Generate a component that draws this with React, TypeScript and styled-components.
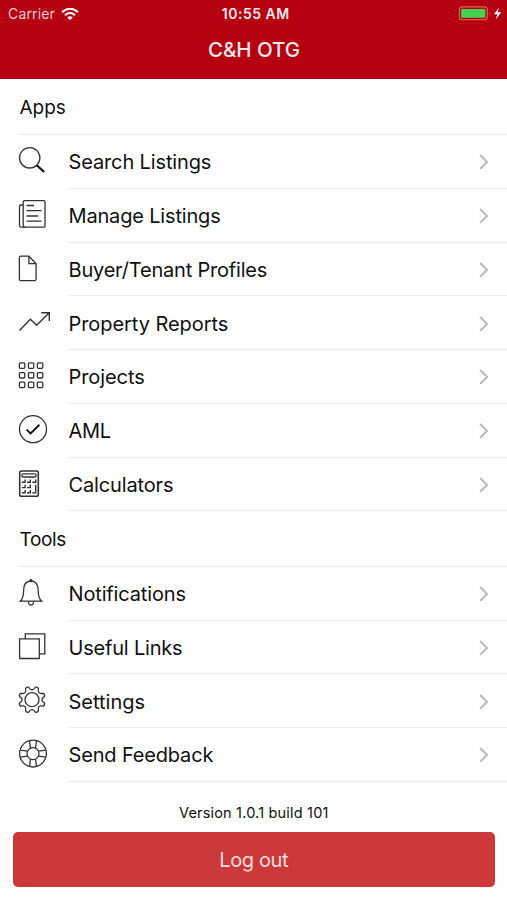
import React from "react";
import styled, { createGlobalStyle } from "styled-components";

const GlobalStyle = createGlobalStyle`
  * { box-sizing: border-box; }
  body { margin: 0; background: #fff; font-family: Inter, "Liberation Sans", sans-serif; color: #111; }
`;

const Screen = styled.main`
  width: 507px;
  height: 900px;
  overflow: hidden;
  background: #fefefe;
  display: flex;
  flex-direction: column;
`;

const Header = styled.header`
  height: 79px;
  flex: none;
  background: #b50012;
  color: #ffe9ea;
`;

const StatusBar = styled.div`
  height: 28px;
  padding: 0 3.5px 0 8px;
  display: grid;
  grid-template-columns: 1fr auto 1fr;
  align-items: center;
  font-size: 14px;
  line-height: 28px;
`;

const Carrier = styled.div`
  display: flex;
  align-items: center;
  gap: 6.5px;
  color: #f8cdd0;
  letter-spacing: 0.15px;
`;

const Clock = styled.div`
  font-weight: 600;
  font-size: 14px;
  letter-spacing: 0.5px;
`;

const Power = styled.div`
  display: flex;
  justify-content: flex-end;
  align-items: center;
`;

const Title = styled.h1`
  margin: 0;
  font-size: 20.5px;
  line-height: 44px;
  font-weight: 500;
  text-align: center;
  letter-spacing: -0.05px;
  padding-left: 1px;
`;

const SectionTitle = styled.h2<{ $height: number; $tracking: number }>`
  margin: 0 0 0 19px;
  padding-left: 0.5px;
  height: ${(p) => p.$height}px;
  flex: none;
  border-bottom: 1px solid #e9e9e9;
  font-size: 19px;
  line-height: 57px;
  font-weight: 400;
  letter-spacing: ${(p) => p.$tracking}px;
`;

const List = styled.ul`
  margin: 0;
  padding: 0;
  list-style: none;
  flex: none;
`;

const Row = styled.li`
  height: 53.75px;
  display: flex;
`;

const Glyph = styled.svg`
  width: 68px;
  height: 53px;
  flex: none;
  fill: none;
  stroke: #333;
  stroke-width: 1.3;
`;

const RowBody = styled.div`
  flex: 1;
  display: flex;
  align-items: center;
  justify-content: space-between;
  padding-right: 18px;
  border-bottom: 1px solid #e9e9e9;
`;

const Label = styled.span<{ $tracking: number }>`
  padding: 2px 0 0 0.5px;
  font-size: 20px;
  line-height: 50px;
  letter-spacing: ${(p) => p.$tracking}px;
  white-space: nowrap;
`;

const Footer = styled.footer`
  padding: 20px 12.5px 0 13px;
  text-align: center;
`;

const Version = styled.div`
  font-size: 14.5px;
  line-height: 22px;
  height: 30px;
  letter-spacing: 0.18px;
`;

const LogoutButton = styled.button`
  width: 100%;
  height: 55px;
  border: 0;
  border-radius: 5px;
  background: #cc393b;
  color: #fbdfdf;
  font: 400 20px/55px Inter, "Liberation Sans", sans-serif;
  letter-spacing: -0.35px;
  padding: 1px 0 0;
  display: block;
`;

const gearPath = (() => {
  const cx = 32;
  const cy = 25.7;
  const at = (r: number, deg: number) => {
    const a = (deg * Math.PI) / 180;
    return `${(cx + r * Math.cos(a)).toFixed(2)} ${(cy + r * Math.sin(a)).toFixed(2)}`;
  };
  let d = `M${at(9.9, 0)}`;
  for (let i = 0; i < 8; i++) {
    const t = i * 45 + 22.5;
    d += `Q${at(9.9, t - 13)} ${at(12.9, t - 7.5)}Q${at(14.2, t)} ${at(12.9, t + 7.5)}Q${at(9.9, t + 13)} ${at(9.9, t + 22.5)}`;
  }
  return d + "Z";
})();

const icons: Record<string, React.ReactNode> = {
  search: (
    <>
      <circle cx="29.7" cy="22.8" r="10.2" />
      <path d="M36.8 30.2L44.2 37" stroke="#111" strokeWidth="2.2" />
    </>
  ),
  news: (
    <>
      <rect x="23.2" y="11.6" width="21.8" height="26.6" rx="1.2" />
      <path d="M23 16h-2.2q-1.3 0-1.3 1.4v19.1q0 1.7 1.8 1.7h4M26.5 16.5H34M26.5 21.7h15M26.5 27h11.7M26.5 32.2h15" />
    </>
  ),
  file: <path d="M20.7 13.2h8.2l7.2 7.5v15.6q0 1.4-1.4 1.4h-14q-1.3 0-1.3-1.4V14.5q0-1.3 1.3-1.3zM28.9 13.2v7.5h7.2" />,
  trend: <path d="M19.5 34.5L30.4 23.3l6.2 6L49 17M41.2 16.8h8.1v8.2" strokeWidth="1.4" />,
  grid: (
    <>
      {[15.5, 25.2, 34.8].map((y) =>
        [22, 31, 40].map((x) => <rect key={`${x}-${y}`} x={x - 2.6} y={y - 2.6} width="5.4" height="5.4" rx="1" />),
      )}
    </>
  ),
  check: (
    <>
      <circle cx="33" cy="25.2" r="13.5" />
      <path d="M26.6 25.6l4 3.9 8.8-8.7" stroke="#111" strokeWidth="1.9" />
    </>
  ),
  calculator: (
    <>
      <rect x="19.7" y="13" width="18.6" height="25.2" rx="1.8" strokeWidth="1.6" />
      <rect x="22" y="15.8" width="14" height="3.2" rx="1" />
      <path d="M21.8 24.3h3.3v-2.8M27 24.3h3.3v-2.8M32.3 24.3h3.4v-2.8M21.8 29.6h3.3v-2.8M27 29.6h3.3v-2.8M21.8 34.8h3.3V32M27 34.8h3.3V32M32.2 34.9h3.5v-8.1" strokeWidth="1.4" />
    </>
  ),
  bell: (
    <>
      <path d="M20.2 34.2h21.5q-3.5-3-3.5-10.5 0-9.7-7.3-9.7t-7.3 9.7q0 7.5-3.4 10.5z" />
      <path d="M28.4 34.5q0 3.5 2.6 3.5t2.6-3.5" />
      <circle cx="31" cy="13.7" r="1" fill="#222" />
    </>
  ),
  windows: <path d="M19.6 17.9h19.7v19.6H19.6zM25.3 17.6v-4.7h19.5v20h-5.2" />,
  gear: (
    <>
      <path d={gearPath} />
      <circle cx="32" cy="25.7" r="7" />
    </>
  ),
  buoy: (
    <>
      <circle cx="33" cy="25.6" r="13.4" />
      <circle cx="33" cy="25.6" r="6" />
      <path d="M29.5 12.8l1 7.4M36.5 12.8l-1 7.4M29.5 38.4l1-7.4M36.5 38.4l-1-7.4M20.2 22.1l7.4 1M20.2 29.1l7.4-1M45.8 22.1l-7.4 1M45.8 29.1l-7.4-1" />
    </>
  ),
};

type Item = { icon: string; label: string; tracking: number };

const apps: Item[] = [
  { icon: "search", label: "Search Listings", tracking: -0.13 },
  { icon: "news", label: "Manage Listings", tracking: -0.17 },
  { icon: "file", label: "Buyer/Tenant Profiles", tracking: -0.2 },
  { icon: "trend", label: "Property Reports", tracking: -0.06 },
  { icon: "grid", label: "Projects", tracking: -0.08 },
  { icon: "check", label: "AML", tracking: -0.3 },
  { icon: "calculator", label: "Calculators", tracking: -0.15 },
];

const tools: Item[] = [
  { icon: "bell", label: "Notifications", tracking: -0.15 },
  { icon: "windows", label: "Useful Links", tracking: -0.2 },
  { icon: "gear", label: "Settings", tracking: 0 },
  { icon: "buoy", label: "Send Feedback", tracking: -0.16 },
];

const Menu = ({ items }: { items: Item[] }) => (
  <List>
    {items.map((item) => (
      <Row key={item.label}>
        <Glyph viewBox="0 0 68 53">{icons[item.icon]}</Glyph>
        <RowBody>
          <Label $tracking={item.tracking}>{item.label}</Label>
          <svg width="10" height="18" viewBox="0 0 10 18" fill="none" stroke="#bababa" strokeWidth="2">
            <path d="M1.2 3L8 9.9l-6.8 6.9" />
          </svg>
        </RowBody>
      </Row>
    ))}
  </List>
);

export default function App() {
  return (
    <>
      <GlobalStyle />
      <Screen>
        <Header>
          <StatusBar>
            <Carrier>
              Carrier
              <svg width="18" height="13" viewBox="0 0 18 13" fill="none" stroke="#fff" strokeWidth="2.1">
                <path d="M1 4.2Q9-2.7 17 4.2M3.9 7.2Q9 2.8 14.1 7.2" />
                <path d="M6.2 9.4Q9 7 11.8 9.4L9 12.1z" fill="#fff" stroke="none" />
              </svg>
            </Carrier>
            <Clock>10:55 AM</Clock>
            <Power>
              <svg width="46" height="16" viewBox="0 0 46 16">
                <rect x="1.3" y="0.9" width="28" height="12.8" rx="3" fill="none" stroke="#dc6959" strokeWidth="1.1" />
                <rect x="3.1" y="2.9" width="24.3" height="8.8" rx="1.2" fill="#43d551" />
                <path d="M31 5.2q1.8 2 0 4z" fill="#dc6959" />
                <path d="M41 1.4L36 8.2h3.3l-1.5 5.2 5.4-7.2h-3.5z" fill="#fff" />
              </svg>
            </Power>
          </StatusBar>
          <Title>C&amp;H OTG</Title>
        </Header>
        <SectionTitle $height={56} $tracking={-0.05}>Apps</SectionTitle>
        <Menu items={apps} />
        <SectionTitle $height={55.5} $tracking={-0.35}>Tools</SectionTitle>
        <Menu items={tools} />
        <Footer>
          <Version>Version 1.0.1 build 101</Version>
          <LogoutButton>Log out</LogoutButton>
        </Footer>
      </Screen>
    </>
  );
}
